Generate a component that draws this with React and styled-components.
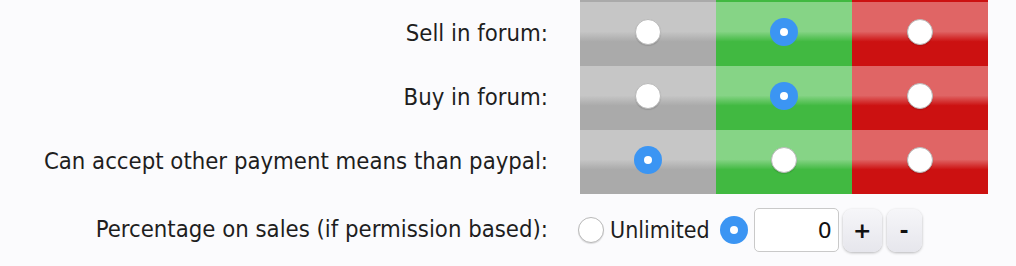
import React, { useState } from 'react';
import styled, { createGlobalStyle, css } from 'styled-components';

const GlobalStyle = createGlobalStyle`
  html, body {
    margin: 0;
    padding: 0;
    background: #fbfbfd;
    overflow: hidden;
  }
  body {
    font-family: "DejaVu Sans Condensed", "DejaVu Sans", sans-serif;
    font-stretch: condensed;
    color: #1e1e1e;
  }
`;

const tones = {
  neutral: { light: '#c6c6c6', dark: '#aaaaaa' },
  allow: { light: '#86d486', dark: '#41b941' },
  deny: { light: '#e06565', dark: '#cc1111' },
};

// Tabla de permisos
const Form = styled.div`
  display: grid;
  grid-template-columns: 580px repeat(3, 136px);
  margin-top: -62px;
`;

const Label = styled.div`
  height: ${(p) => p.$height || 64}px;
  display: flex;
  align-items: center;
  justify-content: flex-end;
  padding-right: 32px;
  font-size: 23.7px;
  line-height: 1;
  white-space: nowrap;
`;

const Cell = styled.label`
  box-sizing: border-box;
  height: 64px;
  padding-bottom: 4px;
  display: flex;
  align-items: center;
  justify-content: center;
  cursor: pointer;
  background: ${(p) => css`linear-gradient(
    to bottom,
    ${tones[p.$tone].light} 0%,
    ${tones[p.$tone].light} 46%,
    ${tones[p.$tone].dark} 62%,
    ${tones[p.$tone].dark} 100%
  )`};
`;

const Radio = styled.span`
  box-sizing: border-box;
  width: ${(p) => (p.$checked ? 28 : 26)}px;
  height: ${(p) => (p.$checked ? 28 : 26)}px;
  border-radius: 50%;
  flex-shrink: 0;
  display: flex;
  align-items: center;
  justify-content: center;
  ${(p) =>
    p.$checked
      ? css`
          background: #3b95f3;
          &::after {
            content: '';
            width: 8px;
            height: 8px;
            border-radius: 50%;
            background: #fff;
          }
        `
      : css`
          background: #fff;
          border: 1px solid #b9b9b9;
          box-shadow: 0 1px 1px rgba(0, 0, 0, 0.12);
        `}
`;

const Controls = styled.div`
  grid-column: 2 / span 3;
  height: 72px;
  display: flex;
  align-items: center;
`;

const Option = styled.label`
  display: flex;
  align-items: center;
  gap: 6px;
  font-size: 23px;
  line-height: 1;
  margin-left: -2px;
  margin-right: 10px;
  cursor: pointer;
`;

const NumberInput = styled.input`
  box-sizing: border-box;
  width: 85px;
  height: 44px;
  margin-left: 6px;
  padding: 0 6px;
  border: 1px solid #c9c9c9;
  border-radius: 5px;
  background: #fff;
  font-family: "DejaVu Sans", sans-serif;
  font-size: 22px;
  text-align: right;
  color: #111;
  outline: none;
`;

const StepButton = styled.button`
  box-sizing: border-box;
  width: ${(p) => p.$width}px;
  height: 43px;
  margin-left: ${(p) => p.$gap}px;
  border: none;
  border-radius: 9px;
  background: linear-gradient(to bottom, #f6f6f9, #e6e6ec);
  box-shadow: 0 1px 3px rgba(0, 0, 0, 0.28);
  font-family: "DejaVu Sans", sans-serif;
  font-size: 22px;
  font-weight: bold;
  color: #111;
  cursor: pointer;
`;

const rows = [
  { key: 'prev', label: '', value: 1 },
  { key: 'sell', label: 'Sell in forum:', value: 1 },
  { key: 'buy', label: 'Buy in forum:', value: 1 },
  { key: 'other', label: 'Can accept other payment means than paypal:', value: 0 },
];

const columns = ['neutral', 'allow', 'deny'];

const App = () => {
  const [values, setValues] = useState(
    Object.fromEntries(rows.map((r) => [r.key, r.value]))
  );
  const [limited, setLimited] = useState(true);
  const [percent, setPercent] = useState(0);

  return (
    <>
      <GlobalStyle />
      <Form>
        {rows.map((row) => (
          <React.Fragment key={row.key}>
            <Label>{row.label}</Label>
            {columns.map((tone, i) => (
              <Cell
                key={tone}
                $tone={tone}
                onClick={() => setValues({ ...values, [row.key]: i })}
              >
                <Radio $checked={values[row.key] === i} />
              </Cell>
            ))}
          </React.Fragment>
        ))}

        <Label $height={72}>Percentage on sales (if permission based):</Label>
        <Controls>
          <Option onClick={() => setLimited(false)}>
            <Radio $checked={!limited} />
            Unlimited
          </Option>
          <Radio $checked={limited} onClick={() => setLimited(true)} />
          <NumberInput
            type="text"
            value={percent}
            onChange={(e) => setPercent(e.target.value)}
          />
          <StepButton $width={39} $gap={4} onClick={() => setPercent(Number(percent) + 1)}>
            +
          </StepButton>
          <StepButton $width={35} $gap={5} onClick={() => setPercent(Number(percent) - 1)}>
            -
          </StepButton>
        </Controls>
      </Form>
    </>
  );
};

export default App;
